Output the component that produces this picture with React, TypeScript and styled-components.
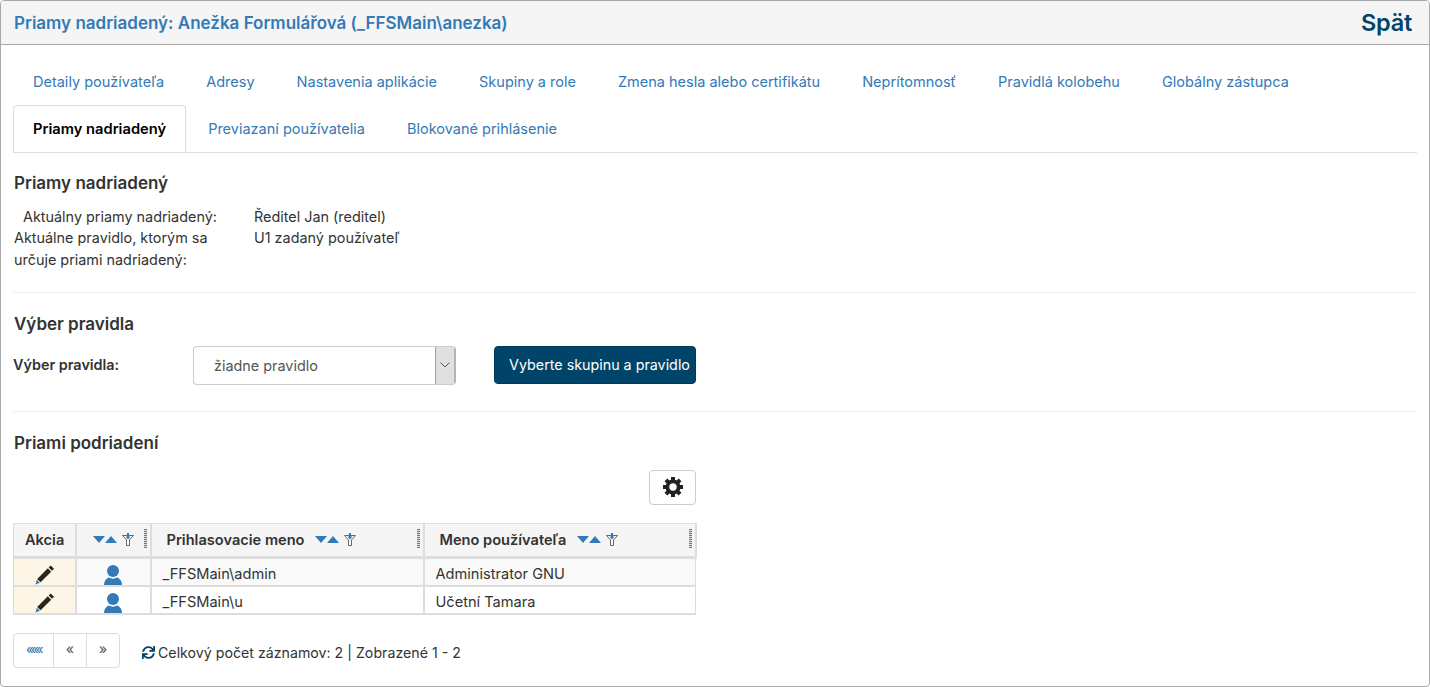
import React, { FC, ReactElement } from 'react';
import styled, { createGlobalStyle } from 'styled-components';
import { FaSync } from 'react-icons/fa';

const GlobalStyle = createGlobalStyle`
    html, body {
        margin: 0;
        padding: 0;
        background: #fff;
    }
    body {
        font-family: Inter, "Liberation Sans", sans-serif;
        font-size: 14.4px;
        color: #333;
    }
`

const Panel = styled.div`
    box-sizing: border-box;
    width: 1430px;
    height: 687px;
    border: 1px solid #a9a9a9;
    border-radius: 4px;
    overflow: hidden;
`

const PanelHeader = styled.div`
    box-sizing: border-box;
    height: 44px;
    display: flex;
    align-items: center;
    justify-content: space-between;
    padding: 0 17px 0 13px;
    background: #f5f5f5;
    border-bottom: 1px solid #a9a9a9;
`

const PanelTitle = styled.a`
    font-size: 17px;
    font-weight: 600;
    color: #337ab7;
`

const BackLink = styled.a`
    font-size: 23.5px;
    font-weight: 600;
    letter-spacing: -0.01em;
    color: #004469;
`

const PanelBody = styled.div`
    padding: 13px 12px 0;
`

const TabList = styled.ul`
    display: flex;
    flex-wrap: wrap;
    list-style: none;
    margin: 0;
    padding: 0;
    border-bottom: 1px solid #ddd;
`

const TabBreak = styled.li`
    flex-basis: 100%;
    height: 0;
`

const TabItem = styled.li<{ $active?: boolean }>`
    box-sizing: border-box;
    height: 47px;
    margin-right: 2px;
    margin-bottom: ${p => (p.$active ? '-1px' : '0')};
    padding: 0 19px;
    line-height: 46px;
    font-size: ${p => (p.$active ? '14.7px' : '14.5px')};
    color: ${p => (p.$active ? '#000' : '#337ab7')};
    font-weight: ${p => (p.$active ? 600 : 400)};
    background: #fff;
    border: 1px solid ${p => (p.$active ? '#ddd' : 'transparent')};
    border-bottom: none;
    border-radius: 4px 4px 0 0;
`

const SectionTitle = styled.h3<{ $top: number }>`
    margin: ${p => p.$top}px 0 0 1px;
    font-size: 17px;
    font-weight: 600;
    line-height: 20px;
    color: #333;
`

const Divider = styled.hr<{ $top: number }>`
    margin: ${p => p.$top}px 0 0;
    border: 0;
    border-top: 1px solid #eee;
`

const InfoGrid = styled.div`
    display: grid;
    grid-template-columns: 210px 1fr;
    column-gap: 30px;
    margin: 12.5px 0 0 1px;
    line-height: 21.5px;
    font-size: 14.4px;
`

const InfoLabel = styled.div<{ $indent?: boolean }>`
    padding-left: ${p => (p.$indent ? '9px' : '0')};
`

const FormRow = styled.div`
    display: flex;
    align-items: flex-start;
    margin-top: 12px;
`

const FormLabel = styled.label`
    width: 180px;
    font-size: 14.4px;
    font-weight: 600;
    line-height: 37px;
`

const SelectBox = styled.div`
    box-sizing: border-box;
    width: 263px;
    height: 39px;
    display: flex;
    justify-content: space-between;
    border: 1px solid #ccc;
    border-right: none;
    border-radius: 4px;
    overflow: hidden;
`

const SelectValue = styled.span`
    padding-left: 20px;
    line-height: 37px;
    font-size: 14.4px;
    color: #555;
`

const SelectArrow = styled.span`
    box-sizing: border-box;
    width: 21px;
    display: flex;
    align-items: center;
    justify-content: center;
    background: #e0e0e0;
    border-left: 1px solid #a0a0a0;
    border-right: 2px solid #b4b4b4;
`

const PrimaryButton = styled.button`
    box-sizing: border-box;
    width: 202px;
    height: 38px;
    margin-left: 38px;
    padding: 0 0 0 9px;
    background: #004469;
    border: 1px solid #003a5a;
    border-radius: 4px;
    color: #fff;
    font-family: inherit;
    font-size: 14.3px;
    white-space: nowrap;
`

const TableArea = styled.div`
    width: 683px;
`

const ToolbarRow = styled.div`
    display: flex;
    justify-content: flex-end;
    margin-top: 17px;
`

const GearButton = styled.button`
    box-sizing: border-box;
    width: 47px;
    height: 35px;
    display: flex;
    align-items: center;
    justify-content: center;
    padding: 0;
    background: #fff;
    border: 1px solid #ccc;
    border-radius: 4px;
`

const UserTable = styled.table`
    width: 682px;
    margin-top: 18px;
    border-collapse: collapse;
    table-layout: fixed;
`

const HeadCell = styled.th<{ $width: number; $pad?: number }>`
    position: relative;
    box-sizing: border-box;
    width: ${p => p.$width}px;
    height: 34px;
    padding: 0 0 0 ${p => p.$pad ?? 15}px;
    background: #f5f5f5;
    border: 2px solid #ddd;
    border-top-width: 1px;
    border-left-width: 1px;
    border-bottom-width: 3px;
    text-align: left;
    font-size: 14.6px;
    font-weight: 600;
    white-space: nowrap;
`

const HeadInner = styled.div`
    display: flex;
    align-items: center;
    gap: 11px;
`

const SortIcons = styled.span`
    display: inline-flex;
    align-items: center;
    gap: 5px;
`

const SortPair = styled.span`
    display: inline-flex;
    align-items: center;
`

const Grip = styled.span`
    position: absolute;
    right: 3px;
    top: 5px;
    width: 3px;
    height: 19px;
    background: repeating-linear-gradient(to bottom, #777 0 1px, #ddd 1px 2px);
`

const DataRow = styled.tr<{ $shade?: boolean }>`
    background: ${p => (p.$shade ? '#f9f9f9' : '#fff')};
`

const ActionCell = styled.td`
    height: 26px;
    padding: 0;
    background: #fdf5e6;
    border: 1px solid #ddd;
    border-bottom-width: 2px;
    text-align: center;
`

const IconCell = styled.td`
    height: 26px;
    padding: 0;
    border: 1px solid #ddd;
    border-left-width: 2px;
    border-bottom-width: 2px;
    text-align: center;
`

const IconClip = styled.div`
    box-sizing: border-box;
    height: 26px;
    padding-top: 6px;
    overflow: hidden;
    line-height: 0;
`

const TextCell = styled.td`
    height: 22px;
    padding: 4px 0 0 11px;
    border: 1px solid #ddd;
    border-left-width: 2px;
    border-bottom-width: 2px;
    font-size: 14.6px;
    color: #333;
`

const PagerRow = styled.div`
    display: flex;
    align-items: center;
    margin-top: 18px;
`

const Pager = styled.div`
    display: flex;
    height: 35px;
    box-sizing: border-box;
    border: 1px solid #ddd;
    border-radius: 4px;
`

const PagerItem = styled.span<{ $first?: boolean }>`
    box-sizing: border-box;
    width: ${p => (p.$first ? 39 : 33)}px;
    display: flex;
    align-items: center;
    justify-content: center;
    padding-bottom: 3px;
    color: ${p => (p.$first ? '#2a6fa8' : '#555')};
    font-size: ${p => (p.$first ? 13 : 14.4)}px;
    letter-spacing: ${p => (p.$first ? '-2.5px' : '0')};
    & + & {
        border-left: 1px solid #ddd;
    }
`

const PagerStatus = styled.div`
    display: flex;
    align-items: center;
    gap: 3px;
    margin-left: 22px;
    padding-top: 5px;
    font-size: 14.2px;
    color: #333;
`

const RefreshIcon = styled(FaSync)`
    color: #004469;
    font-size: 13px;
`

const GearIcon: FC = () => (
    <svg width="20" height="20" viewBox="0 0 20 20" fill="#222">
        <circle cx="10" cy="10" r="5.6" fill="none" stroke="#222" strokeWidth="3.8" />
        {[0, 45, 90, 135, 180, 225, 270, 315].map(a => (
            <rect key={a} x="8" y="0" width="4" height="4" transform={`rotate(${a} 10 10)`} />
        ))}
    </svg>
);

const SortDown: FC = () => (
    <svg width="12" height="7" viewBox="0 0 12 7"><path d="M0 0h12L6 7z" fill="#337ab7" /></svg>
);

const SortUp: FC = () => (
    <svg width="12" height="7" viewBox="0 0 12 7"><path d="M0 7h12L6 0z" fill="#337ab7" /></svg>
);

const FilterIcon: FC = () => (
    <svg width="12" height="13" viewBox="0 0 12 13">
        <path d="M0.500 2.500h11L7.500 7v5.500h-3V7z" fill="#fff" stroke="#666" strokeWidth="1" />
        <path d="M5 0h2v3.500h1.500L6 6.500 3.500 3.500H5z" fill="#337ab7" />
    </svg>
);

const PencilIcon: FC = () => (
    <svg width="20" height="20" viewBox="-1 0 20 20">
        <path d="M15.700 0.500l3.300 3.300-2 2-3.300-3.300z" fill="#2b2420" />
        <path d="M12.800 3.300l3.400 3.400L5.600 17.300l-3.400-3.400z" fill="#2b2420" />
        <path d="M1.800 14.800l3 3L0.500 19.500z" fill="#337ab7" />
    </svg>
);

const UserIcon: FC = () => (
    <svg width="18" height="22" viewBox="0 0 18 22">
        <circle cx="9" cy="6" r="6" fill="#337ab7" />
        <path d="M0 20c0-4 2-6.500 5-7.500 2.500 1.500 5.500 1.500 8 0 3 1 5 3.500 5 7.500v2H0z" fill="#337ab7" />
    </svg>
);

const SelectChevron: FC = () => (
    <svg width="10" height="6" viewBox="0 0 10 6"><path d="M0.500 0.500l4.500 4.500 4.500-4.500" fill="none" stroke="#555" strokeWidth="1" /></svg>
);

const SortFilter: FC = () => (
    <SortIcons>
        <SortPair>
            <SortDown />
            <SortUp />
        </SortPair>
        <FilterIcon />
    </SortIcons>
);

const tabsFirstRow: string[] = [
    'Detaily používateľa',
    'Adresy',
    'Nastavenia aplikácie',
    'Skupiny a role',
    'Zmena hesla alebo certifikátu',
    'Neprítomnosť',
    'Pravidlá kolobehu',
    'Globálny zástupca',
];

const users = [
    { login: '_FFSMain\\admin', name: 'Administrator GNU', shade: true },
    { login: '_FFSMain\\u', name: 'Učetní Tamara', shade: false },
];

const App: FC = (): ReactElement => {
    return (
        <Panel>
            <GlobalStyle />
            <PanelHeader>
                <PanelTitle>Priamy nadriadený: Anežka Formulářová (_FFSMain\anezka)</PanelTitle>
                <BackLink>Spät</BackLink>
            </PanelHeader>
            <PanelBody>
                <TabList>
                    {tabsFirstRow.map(t => <TabItem key={t}>{t}</TabItem>)}
                    <TabBreak />
                    <TabItem $active>Priamy nadriadený</TabItem>
                    <TabItem>Previazaní používatelia</TabItem>
                    <TabItem>Blokované prihlásenie</TabItem>
                </TabList>

                <SectionTitle $top={20}>Priamy nadriadený</SectionTitle>
                <InfoGrid>
                    <InfoLabel $indent>Aktuálny priamy nadriadený:</InfoLabel>
                    <div>Ředitel Jan (reditel)</div>
                    <InfoLabel>Aktuálne pravidlo, ktorým sa určuje priami nadriadený:</InfoLabel>
                    <div>U1 zadaný používateľ</div>
                </InfoGrid>

                <Divider $top={21.5} />
                <SectionTitle $top={21}>Výber pravidla</SectionTitle>
                <FormRow>
                    <FormLabel>Výber pravidla:</FormLabel>
                    <SelectBox>
                        <SelectValue>žiadne pravidlo</SelectValue>
                        <SelectArrow><SelectChevron /></SelectArrow>
                    </SelectBox>
                    <PrimaryButton>Vyberte skupinu a pravidlo</PrimaryButton>
                </FormRow>

                <Divider $top={26} />
                <SectionTitle $top={21}>Priami podriadení</SectionTitle>

                <TableArea>
                    <ToolbarRow>
                        <GearButton><GearIcon /></GearButton>
                    </ToolbarRow>
                    <UserTable>
                        <thead>
                            <tr>
                                <HeadCell $width={62} $pad={11}>Akcia</HeadCell>
                                <HeadCell $width={75} $pad={16}>
                                    <HeadInner><SortFilter /></HeadInner>
                                    <Grip />
                                </HeadCell>
                                <HeadCell $width={273}>
                                    <HeadInner>Prihlasovacie meno <SortFilter /></HeadInner>
                                    <Grip />
                                </HeadCell>
                                <HeadCell $width={272}>
                                    <HeadInner>Meno používateľa <SortFilter /></HeadInner>
                                    <Grip />
                                </HeadCell>
                            </tr>
                        </thead>
                        <tbody>
                            {users.map(u => (
                                <DataRow key={u.login} $shade={u.shade}>
                                    <ActionCell><IconClip><PencilIcon /></IconClip></ActionCell>
                                    <IconCell><IconClip><UserIcon /></IconClip></IconCell>
                                    <TextCell>{u.login}</TextCell>
                                    <TextCell>{u.name}</TextCell>
                                </DataRow>
                            ))}
                        </tbody>
                    </UserTable>
                </TableArea>

                <PagerRow>
                    <Pager>
                        <PagerItem $first>«««</PagerItem>
                        <PagerItem>«</PagerItem>
                        <PagerItem>»</PagerItem>
                    </Pager>
                    <PagerStatus>
                        <RefreshIcon />
                        Celkový počet záznamov: 2 | Zobrazené 1 - 2
                    </PagerStatus>
                </PagerRow>
            </PanelBody>
        </Panel>
    );
};

export default App;
